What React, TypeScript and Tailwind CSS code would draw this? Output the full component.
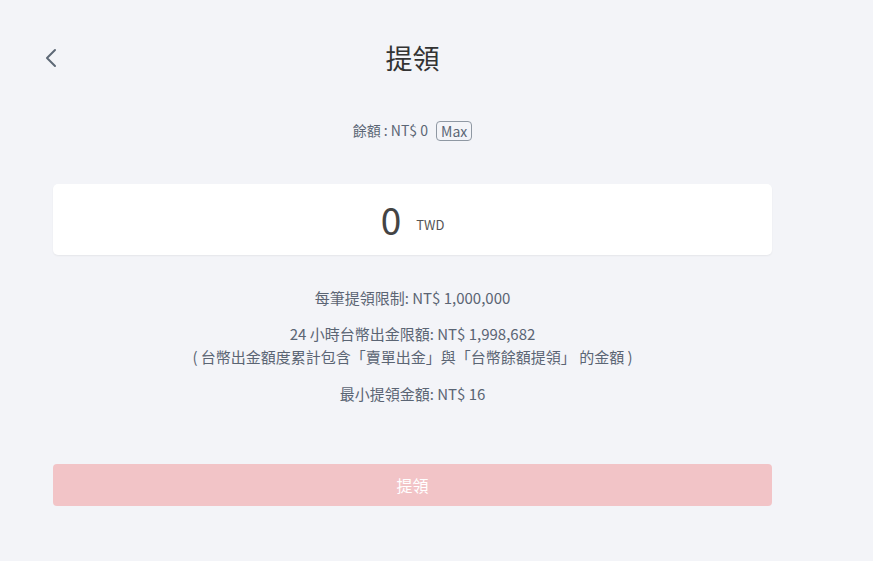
import React from 'react'

type Props = {}

const font = { fontFamily: '"Noto Sans CJK TC", "Noto Sans", sans-serif' }

function WithdrawPage({}: Props) {
  return (
    <div lang="zh-TW" className="min-h-screen w-full bg-[#f3f4f8] [text-spacing-trim:space-all]" style={font}>
      <div className="ml-[53px] w-[719px] pt-[40px]">
        {/* Header */}
        <div className="relative flex h-[36px] items-center justify-center">
          <button className="absolute left-[-10px] top-[7px] text-[#5d6876]">
            <svg width="16" height="22" viewBox="0 0 16 22" fill="none">
              <path d="M12 3 L4 11 L12 19" stroke="currentColor" strokeWidth="2" strokeLinecap="round" strokeLinejoin="round" />
            </svg>
          </button>
          <h1 className="text-[27px] leading-[36px] font-normal text-[#333333]">提領</h1>
        </div>

        {/* Balance */}
        <div className="mt-[44px] flex items-center justify-center gap-[8px] text-[14px] text-[#5b6675]">
          <span>餘額 : NT$ 0</span>
          <button className="rounded-[4px] border border-[#8f98a3] px-[4px] text-[14px] leading-[18px] text-[#5b6675]">
            Max
          </button>
        </div>

        {/* Amount input */}
        <div className="mt-[43px] flex h-[71px] items-center justify-center rounded-[5px] bg-white shadow-[0_1px_2px_rgba(0,0,0,0.06)]">
          <span className="text-[37px] leading-none text-[#444444]">0</span>
          <span className="ml-[15px] mt-[10px] text-[13px] text-[#555555]">TWD</span>
        </div>

        {/* Limits */}
        <div className="mt-[33px] flex flex-col items-center text-[15px] text-[#5b6574]">
          <p className="leading-[20px]">每筆提領限制: NT$ 1,000,000</p>
          <p className="mt-[14px] leading-[23px]">24 小時台幣出金限額: NT$ 1,998,682</p>
          <p className="leading-[23px]">( 台幣出金額度累計包含「賣單出金」與「台幣餘額提領」 的金額 )</p>
          <p className="mt-[16px] leading-[20px]">最小提領金額: NT$ 16</p>
        </div>

        {/* Submit */}
        <button
          disabled
          className="mt-[60px] h-[42px] w-full rounded-[4px] bg-[#f2c4c7] text-[16px] text-white"
        >
          提領
        </button>
      </div>
    </div>
  )
}

export default WithdrawPage
